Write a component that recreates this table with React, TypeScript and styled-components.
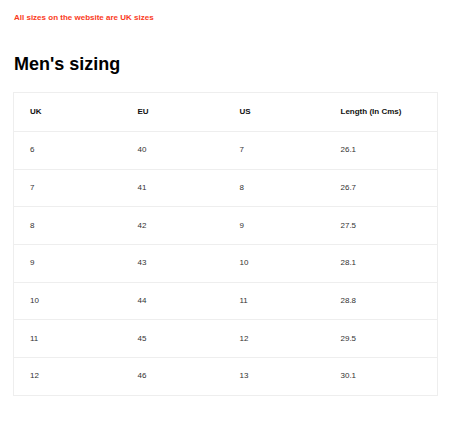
import React from "react";
import styled, { createGlobalStyle } from "styled-components";

const GlobalStyle = createGlobalStyle`
  html, body { margin: 0; padding: 0; background: #fff; }
  body { font-family: "Liberation Sans", Arial, sans-serif; }
`;

const Page = styled.div`
  padding: 12px 14px 0 13px;
  width: 424px;
`;

const Notice = styled.p`
  margin: 1px 0 0 1px;
  font-size: 8px;
  line-height: 10px;
  font-weight: 700;
  color: #fa3a1c;
`;

const Title = styled.h2`
  margin: 29px 0 0 1px;
  font-size: 18px;
  line-height: 24px;
  font-weight: 700;
  color: #000;
`;

const Table = styled.table`
  margin-top: 16px;
  width: 424px;
  border-collapse: collapse;
  table-layout: fixed;
  border: 1px solid #eeeeee;
`;

const Row = styled.tr<{ $head?: boolean }>`
  height: ${(p) => (p.$head ? "39px" : "37.7px")};
  border-top: ${(p) => (p.$head ? "none" : "1px solid #eeeeee")};
`;

const Cell = styled.td<{ $head?: boolean }>`
  padding: 0 0 0 16px;
  font-size: 8px;
  line-height: 10px;
  font-weight: ${(p) => (p.$head ? 700 : 400)};
  color: ${(p) => (p.$head ? "#111" : "#333")};
  text-align: left;
  vertical-align: middle;
`;

const head = ["UK", "EU", "US", "Length (In Cms)"];
const rows = [
  ["6", "40", "7", "26.1"],
  ["7", "41", "8", "26.7"],
  ["8", "42", "9", "27.5"],
  ["9", "43", "10", "28.1"],
  ["10", "44", "11", "28.8"],
  ["11", "45", "12", "29.5"],
  ["12", "46", "13", "30.1"],
];
const widths = [108, 102, 101, 113];

export default function App() {
  return (
    <>
      <GlobalStyle />
      <Page>
        <Notice>All sizes on the website are UK sizes</Notice>
        <Title>Men's sizing</Title>
        <Table>
          <colgroup>
            {widths.map((w, i) => (
              <col key={i} style={{ width: w }} />
            ))}
          </colgroup>
          <thead>
            <Row $head>
              {head.map((h) => (
                <Cell as="th" $head key={h}>
                  {h}
                </Cell>
              ))}
            </Row>
          </thead>
          <tbody>
            {rows.map((r, i) => (
              <Row key={i}>
                {r.map((c, j) => (
                  <Cell key={j}>{c}</Cell>
                ))}
              </Row>
            ))}
          </tbody>
        </Table>
      </Page>
    </>
  );
}
